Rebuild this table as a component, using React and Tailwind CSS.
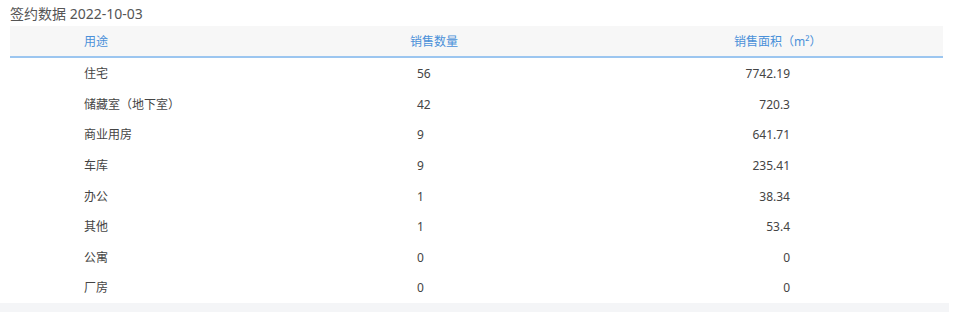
const rows = [
  { use: '住宅', count: 56, area: '7742.19' },
  { use: '储藏室（地下室）', count: 42, area: '720.3' },
  { use: '商业用房', count: 9, area: '641.71' },
  { use: '车库', count: 9, area: '235.41' },
  { use: '办公', count: 1, area: '38.34' },
  { use: '其他', count: 1, area: '53.4' },
  { use: '公寓', count: 0, area: '0' },
  { use: '厂房', count: 0, area: '0' },
];

const font = { fontFamily: '"Noto Sans", "Noto Sans CJK SC", sans-serif' };

export default function App() {
  return (
    <div className="w-[954px] h-[312px] bg-white overflow-hidden flex flex-col" style={font}>
      {/* Title */}
      <div className="h-[26px] pl-[10px] flex items-center text-[14px] text-[#555]">
        签约数据 2022-10-03
      </div>

      {/* Table */}
      <div className="ml-[10px] w-[933px]">
        <div className="h-[32px] pt-[1px] bg-[#f7f7f7] border-b-2 border-[#9cc6f0] flex items-center text-[12px] text-[#4a90d9]">
          <div className="w-[400px] pl-[74px]">用途</div>
          <div className="w-[324px]">销售数量</div>
          <div className="flex-1">销售面积（m²）</div>
        </div>
        {rows.map((r) => (
          <div key={r.use} className="h-[30.6px] pt-[2px] flex items-center text-[12px] text-[#444]">
            <div className="w-[400px] pl-[74px]">{r.use}</div>
            <div className="w-[324px] pl-[7px]">{r.count}</div>
            <div className="flex-1">
              <div className="w-[56px] text-right">{r.area}</div>
            </div>
          </div>
        ))}
      </div>

      {/* Bottom strip */}
      <div className="w-[949px] flex-1 bg-[#f4f5f7]" />
    </div>
  );
}
